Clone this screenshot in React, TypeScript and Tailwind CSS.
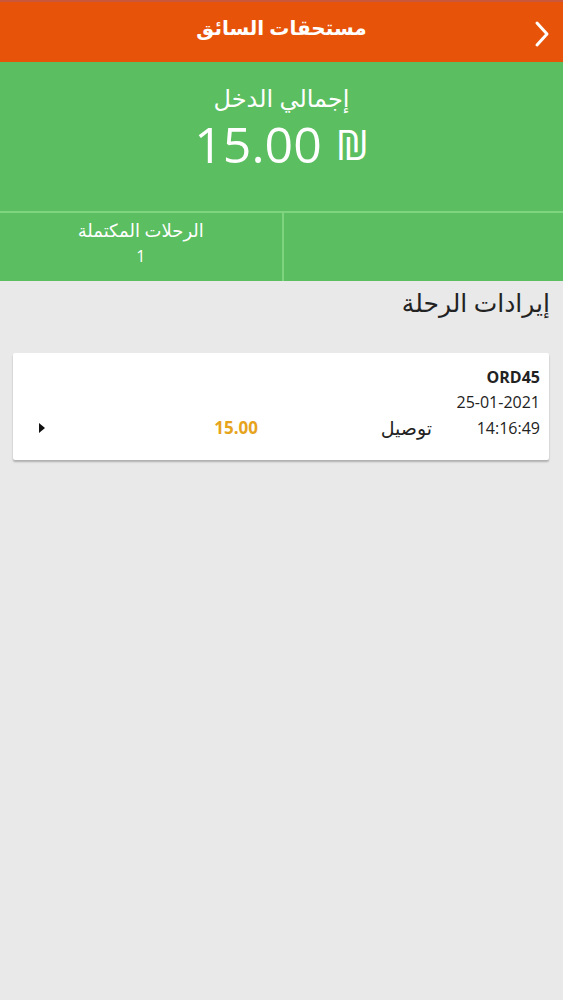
export default function App() {
  const font = { fontFamily: '"Open Sans", "DejaVu Sans", sans-serif' };
  return (
    <div dir="rtl" className="min-h-[1000px] w-[563px] bg-[#e9e9ea]" style={font}>
      <div className="border-t-2 border-[#c9573b] bg-[#e8530a]">
        <div className="relative flex h-[60px] items-center justify-center pb-[9px]">
          <h1 className="text-[20px] font-bold leading-[30px] text-white">مستحقات السائق</h1>
          <svg
            className="absolute right-[13px] top-[18px]"
            width="16"
            height="28"
            viewBox="0 0 16 28"
            fill="none"
            stroke="white"
            strokeWidth="3"
            strokeLinecap="round"
            strokeLinejoin="round"
          >
            <path d="M3 3 L13 14 L3 25" />
          </svg>
        </div>
      </div>

      <div className="bg-[#5bbe60] text-white">
        <div className="flex h-[149px] flex-col items-center pt-[18px]">
          <div className="text-[24px] leading-[36px]">إجمالي الدخل</div>
          <div dir="ltr" className="flex items-center gap-[14px] text-[50px] leading-[56px]">
            <span>15.00</span>
            <span className="text-[42px]">₪</span>
          </div>
        </div>
        <div className="grid h-[70px] grid-cols-2 border-t-2 border-[#7fd57f]">
          <div className="border-l-2 border-[#7fd57f]" />
          <div className="flex flex-col items-center pt-[4px] leading-[26px]">
            <span className="text-[18px]">الرحلات المكتملة</span>
            <span className="text-[16px]">1</span>
          </div>
        </div>
      </div>

      <div className="px-[13px] pt-[2px]">
        <h2 className="text-[25px] leading-[38px] text-[#222]">إيرادات الرحلة</h2>
      </div>

      <div className="ml-[13px] mr-[14px] mt-[32px] h-[107px] rounded-[2px] bg-white px-[9px] pt-[12px] text-[16px] text-[#222] shadow-[0_2px_2px_rgba(0,0,0,0.25)]">
        <div className="text-[16px] font-bold leading-[24px]">ORD45</div>
        <div className="leading-[27px]">25-01-2021</div>
        <div className="flex items-center leading-[24px]">
          <span className="w-[108px]">14:16:49</span>
          <span className="w-[174px] text-[19px]">توصيل</span>
          <span className="flex-1 text-[17px] font-bold text-[#e6a31c]">15.00</span>
          <svg className="ml-[17px]" width="6" height="10" viewBox="0 0 6 10">
            <path d="M0 0 L6 5 L0 10 Z" fill="#111" />
          </svg>
        </div>
      </div>
    </div>
  );
}
